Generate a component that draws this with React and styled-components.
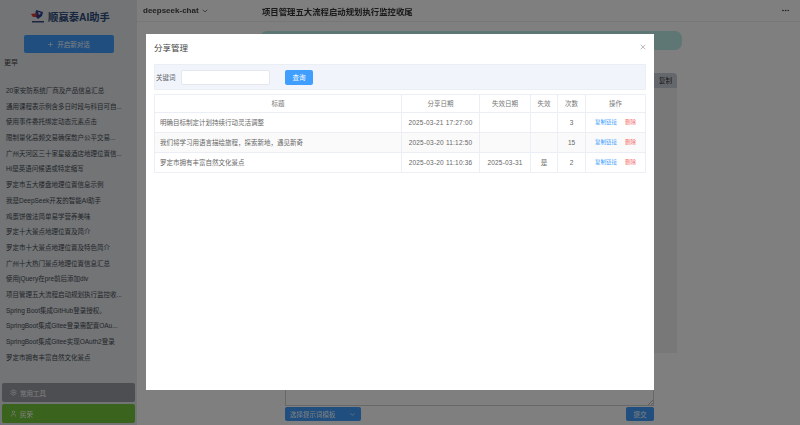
import styled, { createGlobalStyle } from 'styled-components';
import { ChevronDown, Plus, Settings, User, X, Ellipsis } from 'lucide-react';

const chats = [
  '20家安防系统厂商及产品信息汇总',
  '通用课程表示例含多日时段与科目可自...',
  '使用事件委托绑定动态元素点击',
  '限制量化高频交易确保散户公平交易...',
  '广州天河区三十家星级酒店地理位置信...',
  'Hi是英语问候语或特定缩写',
  '罗定市五大楼盘地理位置信息示例',
  '我是DeepSeek开发的智能AI助手',
  '鸡蛋饼做法简单易学营养美味',
  '罗定十大景点地理位置及简介',
  '罗定市十大景点地理位置及特色简介',
  '广州十大热门景点地理位置信息汇总',
  '使用jQuery在pre前后添加div',
  '项目管理五大流程启动规划执行监控收...',
  'Spring Boot集成GitHub登录授权。',
  'SpringBoot集成Gitee登录需配置OAu...',
  'SpringBoot集成Gitee实现OAuth2登录',
  '罗定市拥有丰富自然文化景点',
];

const shares = [
  { title: '明确目标制定计划持续行动灵活调整', date: '2025-03-21 17:27:00', end: '', off: '', count: 3 },
  { title: '我们将学习用语言描绘旅程，探索新地，遇见新奇', date: '2025-03-20 11:12:50', end: '', off: '', count: 15 },
  { title: '罗定市拥有丰富自然文化景点', date: '2025-03-20 11:10:36', end: '2025-03-31', off: '是', count: 2 },
];

const GlobalStyle = createGlobalStyle`
  html, body {
    margin: 0;
    height: 100%;
    overflow: hidden;
  }
  body {
    font-family: "Liberation Sans", "Noto Sans CJK SC", sans-serif;
    color: #606266;
    background: #fff;
  }
  #root {
    height: 100%;
    filter: blur(0.3px);
  }
`;

const Page = styled.div`
  display: flex;
  height: 425px;
`;

const Sidebar = styled.aside`
  width: 137px;
  flex-shrink: 0;
  display: flex;
  flex-direction: column;
  background: #e4e8ec;
  padding: 0 2px;
  box-sizing: border-box;
`;

const Brand = styled.div`
  height: 32px;
  display: flex;
  align-items: center;
  justify-content: center;
  gap: 2px;
  padding-left: 3px;
`;

const BrandName = styled.span`
  font-size: 10.3px;
  font-weight: 700;
  color: #2c4a7a;
`;

const NewChat = styled.button`
  align-self: center;
  width: 90px;
  height: 18px;
  margin-top: 3px;
  border: none;
  border-radius: 2px;
  background: #409eff;
  color: #fff;
  font: inherit;
  font-size: 6.5px;
  display: flex;
  align-items: center;
  justify-content: center;
  gap: 3px;
`;

const GroupLabel = styled.div`
  font-size: 7px;
  padding: 4px 0 0 2px;
  color: #444;
`;

const ChatList = styled.ul`
  list-style: none;
  margin: 16px 0 0;
  padding: 0 0 0 4px;
  flex: 1;
`;

const ChatItem = styled.li`
  height: 15.7px;
  line-height: 15.7px;
  font-size: 6.5px;
  white-space: nowrap;
  color: #444a50;
`;

const SideButton = styled.button`
  height: 19px;
  margin-bottom: 2px;
  border: none;
  border-radius: 2px;
  background: ${(p) => p.$bg};
  color: #fff;
  font: inherit;
  font-size: 6.5px;
  display: flex;
  align-items: center;
  gap: 3px;
  padding: 0 8px;
`;

const Main = styled.main`
  flex: 1;
  min-width: 0;
  display: flex;
  flex-direction: column;
`;

const TopBar = styled.header`
  height: 21px;
  flex-shrink: 0;
  display: flex;
  align-items: center;
  padding: 0 10px 0 6px;
  border-bottom: 1px solid #eee;
`;

const ModelPick = styled.div`
  width: 119px;
  display: flex;
  align-items: center;
  gap: 2px;
  font-size: 8px;
  font-weight: 700;
  color: #444;
`;

const ChatTitle = styled.h1`
  flex: 1;
  margin: 0;
  font-size: 8.4px;
  font-weight: 700;
  color: #333;
`;

const Thread = styled.div`
  flex: 1;
  min-height: 0;
  display: flex;
  flex-direction: column;
  align-items: flex-end;
  padding: 9px 118px 0 16px;
`;

const Bubble = styled.div`
  width: 422px;
  height: 19px;
  border-radius: 7px;
  background: #bdeee8;
`;

const CodeBlock = styled.div`
  width: 420px;
  height: 280px;
  margin: 23px 5px 0 0;
  border-radius: 4px 4px 0 0;
  background: #f0f0f0;
`;

const CodeHead = styled.div`
  height: 15px;
  border-radius: 4px 4px 0 0;
  display: flex;
  align-items: center;
  justify-content: flex-end;
  padding: 0 5px 1px 0;
  box-sizing: border-box;
  background: #c8ced6;
  font-size: 6.5px;
  color: #333;
`;

const Composer = styled.div`
  flex-shrink: 0;
  padding: 0 146px 4px 148px;
`;

const PromptBox = styled.div`
  position: relative;
  height: 45px;
  border: 1px solid #d0d0d0;
`;

const ResizeGrip = styled.svg`
  position: absolute;
  right: 0;
  bottom: 0;
`;

const ComposerActions = styled.div`
  display: flex;
  justify-content: space-between;
  margin-top: 1px;
`;

const BlueButton = styled.button`
  height: 14px;
  width: ${(p) => p.$w}px;
  border: none;
  border-radius: 2px;
  background: #409eff;
  color: #fff;
  font: inherit;
  font-size: 6.5px;
  padding: 0 5px;
  display: flex;
  align-items: center;
  justify-content: ${(p) => (p.$between ? 'space-between' : 'center')};
`;

const Overlay = styled.div`
  position: fixed;
  inset: 0;
  background: rgba(0, 0, 0, 0.5);
`;

const Modal = styled.section`
  position: absolute;
  left: 146px;
  top: 34px;
  width: 508px;
  height: 356px;
  box-sizing: border-box;
  background: #fff;
  padding: 0 8px;
`;

const ModalHead = styled.div`
  height: 25px;
  padding-bottom: 5px;
  display: flex;
  align-items: center;
  justify-content: space-between;
`;

const ModalTitle = styled.h2`
  margin: 0;
  font-size: 8.5px;
  font-weight: 400;
  color: #444;
`;

const Close = styled.button`
  border: none;
  background: none;
  padding: 0;
  display: flex;
  margin-right: -1px;
  color: #999;
`;

const SearchBar = styled.div`
  height: 26px;
  box-sizing: border-box;
  display: flex;
  align-items: center;
  padding: 0 1px;
  background: #f1f4fb;
  border: 1px solid #ebeef5;
`;

const SearchLabel = styled.label`
  font-size: 6.5px;
  color: #606266;
  width: 25px;
`;

const SearchInput = styled.input`
  width: 89px;
  height: 15px;
  box-sizing: border-box;
  border: 1px solid #e4e7ed;
  border-radius: 2px;
  background: #fff;
  outline: none;
`;

const SearchButton = styled.button`
  width: 28px;
  height: 15px;
  margin-left: 15px;
  border: none;
  border-radius: 2px;
  background: #409eff;
  color: #fff;
  font: inherit;
  font-size: 6.5px;
`;

const Table = styled.table`
  width: 100%;
  margin-top: 4px;
  border-collapse: collapse;
  table-layout: fixed;
  font-size: 6.5px;
  color: #666;
`;

const Th = styled.th`
  box-sizing: border-box;
  width: ${(p) => (p.$w ? `${p.$w}px` : 'auto')};
  height: 18px;
  padding: 0 0 1px;
  font-weight: 400;
  font-size: 6.5px;
  text-align: center;
  border: 1px solid #ebeef5;
  color: #777;
`;

const Tr = styled.tr`
  background: ${(p) => (p.$striped ? '#fafafa' : '#fff')};
`;

const Td = styled.td`
  height: 18px;
  padding: 0 ${(p) => (p.$left ? '5px' : '0')} 1px;
  text-align: ${(p) => (p.$left ? 'left' : 'center')};
  letter-spacing: ${(p) => (p.$date ? '0.2px' : '0')};
  border: 1px solid #ebeef5;
  white-space: nowrap;
  overflow: hidden;
`;

const LinkAction = styled.a`
  font-size: 5.5px;
  color: ${(p) => (p.$danger ? '#f56c6c' : '#409eff')};
  margin-left: ${(p) => (p.$danger ? '8px' : '0')};
`;

const Logo = () => (
  <svg width="16" height="15" viewBox="0 0 16 15">
    <path d="M6 1 L13 3 L12 7 L8 10 L5 7 Z" fill="#2c3f8a" />
    <path d="M1 5 L7 4 L6 8 L3 8 Z" fill="#d63a3a" />
    <path d="M8 3 L11 4 L9 6 Z" fill="#e6e9f2" />
    <rect x="2" y="12" width="12" height="1.5" fill="#3c4a80" />
  </svg>
);

export default function App() {
  return (
    <>
      <GlobalStyle />
      <Page>
        <Sidebar>
          <Brand>
            <Logo />
            <BrandName>顺赢泰AI助手</BrandName>
          </Brand>
          <NewChat>
            <Plus size={7} />
            开启新对话
          </NewChat>
          <GroupLabel>更早</GroupLabel>
          <ChatList>
            {chats.map((c) => (
              <ChatItem key={c}>{c}</ChatItem>
            ))}
          </ChatList>
          <SideButton $bg="#9a9da4">
            <Settings size={7} />
            常用工具
          </SideButton>
          <SideButton $bg="#74c83c">
            <User size={7} />
            民荣
          </SideButton>
        </Sidebar>
        <Main>
          <TopBar>
            <ModelPick>
              deepseek-chat
              <ChevronDown size={8} />
            </ModelPick>
            <ChatTitle>项目管理五大流程启动规划执行监控收尾</ChatTitle>
            <Ellipsis size={9} color="#333" />
          </TopBar>
          <Thread>
            <Bubble />
            <CodeBlock>
              <CodeHead>复制</CodeHead>
            </CodeBlock>
          </Thread>
          <Composer>
            <PromptBox>
              <ResizeGrip width="5" height="5" viewBox="0 0 5 5">
                <path d="M0 5 L5 0 M3 5 L5 3" stroke="#888" strokeWidth="0.6" />
              </ResizeGrip>
            </PromptBox>
            <ComposerActions>
              <BlueButton $w={76} $between>
                选择提示词模板
                <ChevronDown size={7} />
              </BlueButton>
              <BlueButton $w={28}>提交</BlueButton>
            </ComposerActions>
          </Composer>
        </Main>
      </Page>
      <Overlay>
        <Modal>
          <ModalHead>
            <ModalTitle>分享管理</ModalTitle>
            <Close>
              <X size={8} />
            </Close>
          </ModalHead>
          <SearchBar>
            <SearchLabel>关键词</SearchLabel>
            <SearchInput />
            <SearchButton>查询</SearchButton>
          </SearchBar>
          <Table>
            <thead>
              <tr>
                <Th>标题</Th>
                <Th $w={78}>分享日期</Th>
                <Th $w={51}>失效日期</Th>
                <Th $w={27}>失效</Th>
                <Th $w={28}>次数</Th>
                <Th $w={60}>操作</Th>
              </tr>
            </thead>
            <tbody>
              {shares.map((s, i) => (
                <Tr key={s.date} $striped={i % 2 === 1}>
                  <Td $left>{s.title}</Td>
                  <Td $date>{s.date}</Td>
                  <Td $date>{s.end}</Td>
                  <Td>{s.off}</Td>
                  <Td>{s.count}</Td>
                  <Td>
                    <LinkAction>复制链接</LinkAction>
                    <LinkAction $danger>删除</LinkAction>
                  </Td>
                </Tr>
              ))}
            </tbody>
          </Table>
        </Modal>
      </Overlay>
    </>
  );
}
